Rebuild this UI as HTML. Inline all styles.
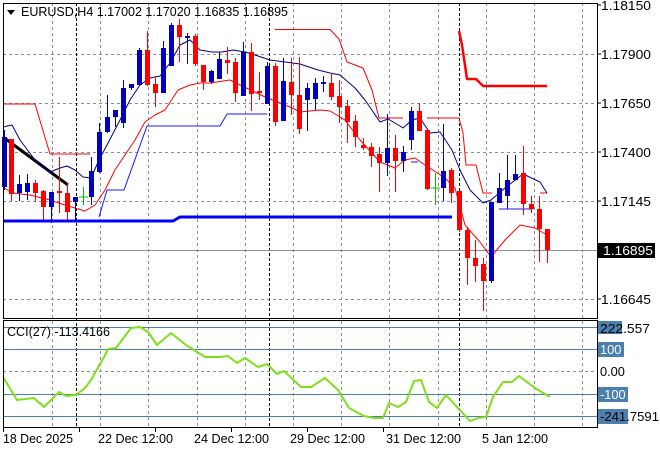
<!DOCTYPE html>
<html><head><meta charset="utf-8"><style>
html,body{margin:0;padding:0;background:#fff;width:660px;height:450px;overflow:hidden}
svg{display:block}
text{font-family:"Liberation Sans","DejaVu Sans",sans-serif;font-size:12.8px;fill:#000}
</style></head><body>
<svg width="660" height="450" viewBox="0 0 660 450" xmlns="http://www.w3.org/2000/svg">
<rect width="660" height="450" fill="#fff"/>
<g stroke="#8a8f99" stroke-width="1" stroke-dasharray="3,3" fill="none">
<path d="M3 54.5H597M3 103.5H597M3 152.5H597M3 201.5H597M3 299.5H597"/>
<path d="M52.5 3V427M100.5 3V427M148.5 3V427M197.5 3V427M245.5 3V427M293.5 3V427M341.5 3V427M389.5 3V427M438.5 3V427M486.5 3V427M534.5 3V427M582.5 3V427"/>
<path d="M3 371.5H597"/>
</g>
<g stroke="#000" stroke-width="1" stroke-dasharray="3,2">
<path d="M76.5 3V427M269.5 3V427M459.5 3V427"/>
</g>
<path d="M3 250.5H597" stroke="#8a8f99"/>
<g stroke="#4a7fae" stroke-width="1">
<path d="M3 327.5H597M3 349.5H597M3 394.5H597M3 416.5H597"/>
</g>
<g fill="none" stroke-linejoin="round">
<polyline stroke="#0000ff" stroke-width="3" points="3,221 173,221 180,217 452,217"/>
<polyline stroke="#1a1aff" stroke-width="1" points="99,217 107,190 124,190 147,126 220,126 227,114 267,114"/>
<path stroke="#1a1aff" d="M411 162H418M499 209H532"/>
<polyline stroke="#ff0000" stroke-width="1" points="3,104 35,104 50,154 90,154"/>
<polyline stroke="#ff0000" stroke-width="1" points="275,29.5 330,29.5 339,39 347,62 363,68 372,90 379,118 403,118"/>
<polyline stroke="#ff0000" stroke-width="1" points="427,118 459,118 463,133 466,165 476,165 483,193 492,193"/>
<path stroke="#ff0000" d="M540 193H547"/>
<polyline stroke="#ff0000" stroke-width="2.5" points="459,31 462,45 467,79 476,79 483,86 547,86"/>
<polyline stroke="#000" stroke-width="3" points="3,137 68,185"/>
<polyline stroke="#000080" stroke-width="1" points="3,127 12,125 20,140 35,160 50,172 60,168 67,166 75,170 83,177 91,178 99,160 107,145 120,120 130,100 140,85 150,78 160,76 170,63 180,45 190,40 200,50 212,52 222,52 233,50 245,52 255,55 270,60 285,62 300,64 318,70 330,73 340,75 355,88 365,100 380,122 388,119 400,126 403,128 412,120 420,118 430,133 440,132 452,150 460,170 470,190 483,203 491,200 505,188 523,174 540,182 547,193"/>
<polyline stroke="#ff0000" stroke-width="1" points="3,187 12,193 30,195 50,200 65,205 75,208 85,211 95,205 105,190 115,170 125,155 135,140 145,122 155,115 165,110 178,90 190,85 200,83 210,83 230,80 240,85 255,92 265,97 275,101 290,107 300,112 320,110 330,111 345,120 360,140 380,162 395,168 405,160 415,158 425,165 445,178 455,188 465,225 480,242 491,257 505,240 520,225 535,228 547,235"/>
</g>
<g stroke-width="1">
<path stroke="#0000c0" d="M4.5 130V190M19.5 175V201M27.5 174V200M51.5 192V223M75.5 197V220M91.5 157V205M99.5 123V173M107.5 95V133M115.5 110V127M123.5 80V128M131.5 84V90M139.5 48V85M163.5 41V93M171.5 23V66M187.5 33V64M211.5 70V84M219.5 52V79M243.5 42V96M267.5 62V104M283.5 58V121M307.5 83V131M315.5 78V110M323.5 76V92M387.5 114V176M403.5 146V172M411.5 107V150M443.5 124V201M491.5 202V283M499.5 173V203M507.5 155V209M515.5 155V180"/>
<path stroke="#ff0000" d="M11.5 139V201M35.5 180V202M43.5 190V220M59.5 157V213M67.5 183V220M147.5 31V86M155.5 77V107M179.5 19V62M195.5 34V66M203.5 65V90M227.5 47V74M235.5 58V102M251.5 43V111M259.5 72V100M275.5 63V126M291.5 58V115M299.5 57V134M331.5 73V100M339.5 80V123M347.5 100V143M355.5 115V147M363.5 138V150M371.5 143V167M379.5 147V192M395.5 135V192M419.5 103V131M427.5 130V190M451.5 168V203M459.5 191V232M467.5 227V285M475.5 240V282M483.5 258V311M523.5 146V215M531.5 196V213M539.5 196V262M547.5 229V263"/>
<path stroke="#00c000" d="M83.5 187V205M79 197H88M435.5 173V205M431 188H440"/>
<g fill="#0000c0">
<rect x="2" y="137" width="5" height="50"/><rect x="17" y="184" width="5" height="9"/><rect x="25" y="183" width="5" height="9"/><rect x="49" y="192" width="5" height="15"/><rect x="73" y="197" width="5" height="5"/><rect x="89" y="171" width="5" height="26"/><rect x="97" y="132" width="5" height="40"/><rect x="105" y="117" width="5" height="15"/><rect x="113" y="110" width="5" height="7"/><rect x="121" y="88" width="5" height="35"/><rect x="129" y="84" width="5" height="4"/><rect x="137" y="50" width="5" height="35"/><rect x="161" y="48" width="5" height="45"/><rect x="169" y="25" width="5" height="41"/><rect x="185" y="36" width="5" height="2"/><rect x="209" y="71" width="5" height="11"/><rect x="217" y="59" width="5" height="20"/><rect x="241" y="52" width="5" height="44"/><rect x="265" y="66" width="5" height="38"/><rect x="281" y="81" width="5" height="40"/><rect x="305" y="88" width="5" height="12"/><rect x="313" y="83" width="5" height="16"/><rect x="321" y="82" width="5" height="2"/><rect x="385" y="148" width="5" height="15"/><rect x="401" y="152" width="5" height="9"/><rect x="409" y="111" width="5" height="29"/><rect x="441" y="171" width="5" height="17"/><rect x="489" y="202" width="5" height="79"/><rect x="497" y="188" width="5" height="15"/><rect x="505" y="180" width="5" height="16"/><rect x="513" y="174" width="5" height="6"/>
</g>
<g fill="#ff0000">
<rect x="9" y="139" width="5" height="55"/><rect x="33" y="183" width="5" height="10"/><rect x="41" y="191" width="5" height="16"/><rect x="57" y="191" width="5" height="2"/><rect x="65" y="193" width="5" height="19"/><rect x="145" y="50" width="5" height="35"/><rect x="153" y="84" width="5" height="9"/><rect x="177" y="25" width="5" height="12"/><rect x="193" y="36" width="5" height="28"/><rect x="201" y="65" width="5" height="17"/><rect x="225" y="60" width="5" height="3"/><rect x="233" y="62" width="5" height="31"/><rect x="249" y="52" width="5" height="42"/><rect x="257" y="91" width="5" height="2"/><rect x="273" y="66" width="5" height="56"/><rect x="289" y="82" width="5" height="13"/><rect x="297" y="95" width="5" height="34"/><rect x="329" y="83" width="5" height="14"/><rect x="337" y="96" width="5" height="11"/><rect x="345" y="106" width="5" height="16"/><rect x="353" y="121" width="5" height="16"/><rect x="361" y="145" width="5" height="3"/><rect x="369" y="147" width="5" height="9"/><rect x="377" y="154" width="5" height="9"/><rect x="393" y="148" width="5" height="13"/><rect x="417" y="111" width="5" height="20"/><rect x="425" y="130" width="5" height="59"/><rect x="449" y="170" width="5" height="23"/><rect x="457" y="191" width="5" height="39"/><rect x="465" y="230" width="5" height="28"/><rect x="473" y="258" width="5" height="8"/><rect x="481" y="264" width="5" height="17"/><rect x="521" y="173" width="5" height="31"/><rect x="529" y="204" width="5" height="5"/><rect x="537" y="209" width="5" height="20"/><rect x="545" y="229" width="5" height="21"/>
</g>
</g>
<polyline fill="none" stroke="#7fe01a" stroke-width="2" stroke-linejoin="round" points="3,377 17,400 34,398 44,407 59,392 66,396 76,395 85,388 91,380 104,357 108,349 116,348 131,328 140,327 148,332 157,345 171,333 186,345 205,357 220,357 228,356 237,363 245,358 258,367 267,364 277,374 284,371 301,387 311,387 325,378 338,390 349,408 364,416 374,418 383,418 389,403 398,407 406,402 414,381 421,380 429,402 437,408 446,395 457,407 470,421 478,418 486,417 493,397 503,382 512,382 519,376 535,388 550,397"/>
<g fill="none" stroke="#000" stroke-width="1">
<rect x="3.5" y="3.5" width="594" height="315"/>
<rect x="3.5" y="320.5" width="594" height="107"/>
</g>
<g stroke="#000"><path d="M597 5H601M597 54H601M597 103H601M597 152H601M597 201H601M597 299H601M3.5 428V432M79.5 428V432M155.5 428V432M231.5 428V432M307.5 428V432M383.5 428V432"/></g>
<path d="M7 10H15L11 15Z" fill="#000"/>
<text x="21" y="16" textLength="267" lengthAdjust="spacingAndGlyphs">EURUSD,H4  1.17002 1.17020 1.16835 1.16895</text>
<g>
<text x="601" y="10" textLength="50" lengthAdjust="spacingAndGlyphs">1.18150</text>
<text x="601" y="59" textLength="50" lengthAdjust="spacingAndGlyphs">1.17900</text>
<text x="601" y="108" textLength="50" lengthAdjust="spacingAndGlyphs">1.17650</text>
<text x="601" y="157" textLength="50" lengthAdjust="spacingAndGlyphs">1.17400</text>
<text x="601" y="206" textLength="50" lengthAdjust="spacingAndGlyphs">1.17145</text>
<text x="601" y="304" textLength="50" lengthAdjust="spacingAndGlyphs">1.16645</text>
</g>
<rect x="598" y="243" width="57" height="15" fill="#000"/>
<text x="603" y="255" style="fill:#fff" textLength="50" lengthAdjust="spacingAndGlyphs">1.16895</text>
<text x="7" y="336" textLength="103" lengthAdjust="spacingAndGlyphs">CCI(27) -113.4166</text>
<rect x="598" y="321" width="24" height="13" fill="#4a7fae"/>
<text x="600" y="333" textLength="50" lengthAdjust="spacingAndGlyphs">222.557</text>
<rect x="598" y="342" width="26" height="15" fill="#4a7fae"/>
<text x="600" y="354" style="fill:#fff">100</text>
<text x="600" y="376">0.00</text>
<rect x="598" y="387" width="30" height="15" fill="#4a7fae"/>
<text x="600" y="399" style="fill:#fff">-100</text>
<rect x="598" y="409" width="30" height="15" fill="#4a7fae"/>
<text x="600" y="421" textLength="59" lengthAdjust="spacingAndGlyphs">-241.7591</text>
<text x="3" y="443" textLength="70" lengthAdjust="spacingAndGlyphs">18 Dec 2025</text>
<text x="98" y="443" textLength="75" lengthAdjust="spacingAndGlyphs">22 Dec 12:00</text>
<text x="194" y="443" textLength="75" lengthAdjust="spacingAndGlyphs">24 Dec 12:00</text>
<text x="290" y="443" textLength="75" lengthAdjust="spacingAndGlyphs">29 Dec 12:00</text>
<text x="386" y="443" textLength="75" lengthAdjust="spacingAndGlyphs">31 Dec 12:00</text>
<text x="482" y="443" textLength="66" lengthAdjust="spacingAndGlyphs">5 Jan 12:00</text>
</svg>
</body></html>
